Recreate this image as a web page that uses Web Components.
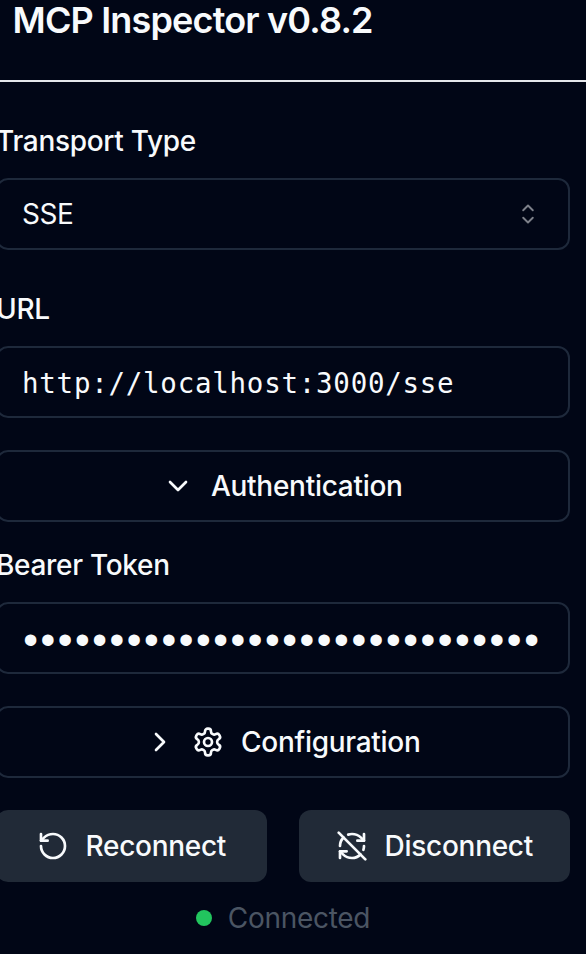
<!DOCTYPE html>
<html lang="en">
<head>
<meta charset="utf-8">
<title>MCP Inspector</title>
<style>
html, body { margin: 0; height: 100%; overflow: hidden; background: #010616; }
body { font-family: Inter, "Liberation Sans", sans-serif; font-size: 28px; letter-spacing: -.28px; color: #f8fafc; }
</style>
</head>
<body>
<inspector-sidebar>
  <side-header slot="header">MCP Inspector v0.8.2</side-header>
  <form-field>
    <field-label slot="label">Transport Type</field-label>
    <select-box>SSE</select-box>
  </form-field>
  <form-field>
    <field-label slot="label">URL</field-label>
    <text-box>http://localhost:3000/sse</text-box>
  </form-field>
  <action-button variant="outline"><ui-icon name="chevron-down"></ui-icon><span>Authentication</span></action-button>
  <form-field class="tight">
    <field-label slot="label">Bearer Token</field-label>
    <text-box secret>••••••••••••••••••••••••••••••</text-box>
  </form-field>
  <action-button variant="outline"><ui-icon name="chevron-right"></ui-icon><ui-icon name="settings"></ui-icon><span>Configuration</span></action-button>
  <button-row>
    <action-button><ui-icon name="rotate-ccw"></ui-icon><span>Reconnect</span></action-button>
    <action-button><ui-icon name="refresh-off"></ui-icon><span>Disconnect</span></action-button>
  </button-row>
  <connection-status>Connected</connection-status>
</inspector-sidebar>
<script>
function define(name, html) {
  const t = document.createElement('template');
  t.innerHTML = html;
  customElements.define(name, class extends HTMLElement {
    constructor() {
      super();
      this.attachShadow({ mode: 'open' }).append(t.content.cloneNode(true));
    }
  });
}

define('inspector-sidebar', `<style>
  :host { display: block; width: 586px; height: 954px; overflow: hidden; }
  main { display: flex; flex-direction: column; gap: 32px; width: 574px; margin-left: -4px; padding-top: 32px; }
  ::slotted(.tight) { margin-top: -16px; }
  ::slotted(connection-status) { margin-top: -16px; }
</style><slot name="header"></slot><main><slot></slot></main>`);

define('side-header', `<style>
  :host { display: block; box-sizing: border-box; height: 82px; padding-left: 12.5px; border-bottom: 2px solid #e5e7eb;
    font-size: 36px; font-weight: 600; line-height: 40px; letter-spacing: -.83px; }
</style><slot></slot>`);

define('form-field', `<style>:host { display: block; }</style><slot name="label"></slot><slot></slot>`);

define('field-label', `<style>
  :host { display: block; box-sizing: border-box; height: 64px; line-height: 52px; padding-top: 1px; font-weight: 480; letter-spacing: -.3px; }
</style><slot></slot>`);

define('select-box', `<style>
  :host { display: flex; align-items: center; justify-content: space-between; box-sizing: border-box; height: 72px;
    border: 2px solid #1e293b; border-radius: 12px; padding: 0 24px; letter-spacing: -.5px; }
  ui-icon { opacity: .5; }
</style><slot></slot><ui-icon name="caret-sort"></ui-icon>`);

define('text-box', `<style>
  :host { display: flex; align-items: center; box-sizing: border-box; height: 72px; border: 2px solid #1e293b;
    border-radius: 12px; padding: 1px 24px 0; white-space: nowrap; overflow: hidden;
    font-family: "DejaVu Sans Mono", monospace; font-size: 27.5px; letter-spacing: .74px; }
  :host([secret]) { font-family: "Liberation Sans", sans-serif; font-size: 42px; letter-spacing: 2.57px; padding: 4px 0 0 25.2px; }
</style><slot></slot>`);

define('action-button', `<style>
  :host { display: flex; flex: 1; align-items: center; justify-content: center; gap: 16px; box-sizing: border-box;
    min-height: 72px; border-radius: 12px; background: #212a37; font-weight: 480; }
  :host([variant=outline]) { border: 2px solid #1e293b; background: none; padding-right: 1px; }
  ::slotted(span) { margin-left: .6px; }
</style><slot></slot>`);

define('button-row', `<style>:host { display: flex; gap: 32px; }</style><slot></slot>`);

define('connection-status', `<style>
  :host { display: flex; align-items: center; justify-content: center; gap: 16px; height: 40px; color: #4b5563; }
  i { width: 16px; height: 16px; border-radius: 50%; background: #22c55e; }
</style><i></i><slot></slot>`);

const ICONS = {
  'chevron-down': '<path d="m6 9 6 6 6-6"/>',
  'chevron-right': '<path d="m9 18 6-6-6-6"/>',
  'settings': '<path d="M12.22 2h-.44a2 2 0 0 0-2 2v.18a2 2 0 0 1-1 1.73l-.43.25a2 2 0 0 1-2 0l-.15-.08a2 2 0 0 0-2.73.73l-.22.38a2 2 0 0 0 .73 2.73l.15.1a2 2 0 0 1 1 1.72v.51a2 2 0 0 1-1 1.74l-.15.09a2 2 0 0 0-.73 2.73l.22.38a2 2 0 0 0 2.73.73l.15-.08a2 2 0 0 1 2 0l.43.25a2 2 0 0 1 1 1.73V20a2 2 0 0 0 2 2h.44a2 2 0 0 0 2-2v-.18a2 2 0 0 1 1-1.73l.43-.25a2 2 0 0 1 2 0l.15.08a2 2 0 0 0 2.73-.73l.22-.39a2 2 0 0 0-.73-2.73l-.15-.08a2 2 0 0 1-1-1.74v-.5a2 2 0 0 1 1-1.74l.15-.09a2 2 0 0 0 .73-2.73l-.22-.38a2 2 0 0 0-2.73-.73l-.15.08a2 2 0 0 1-2 0l-.43-.25a2 2 0 0 1-1-1.73V4a2 2 0 0 0-2-2z"/><circle cx="12" cy="12" r="3"/>',
  'rotate-ccw': '<path d="M3 12a9 9 0 1 0 9-9 9.75 9.75 0 0 0-6.74 2.74L3 8"/><path d="M3 3v5h5"/>',
  'refresh-off': '<path d="M21 8L18.74 5.74A9.75 9.75 0 0 0 12 3C11 3 10.03 3.16 9.13 3.47"/><path d="M8 16H3v5"/><path d="M3 12C3 9.51 4 7.26 5.64 5.64"/><path d="m3 16 2.26 2.26A9.75 9.75 0 0 0 12 21c2.49 0 4.74-1 6.36-2.64"/><path d="M21 12c0 1-.16 1.97-.47 2.87"/><path d="M21 3v5h-5"/><path d="M22 22 2 2"/>'
};
const CARET = '<svg viewBox="0 0 15 15" fill="none" stroke="currentColor" stroke-width=".9" stroke-linecap="round" stroke-linejoin="round"><path d="M5.25 5.75 7.5 3.5l2.25 2.25M5.25 9.25 7.5 11.5l2.25-2.25"/></svg>';
customElements.define('ui-icon', class extends HTMLElement {
  connectedCallback() {
    if (this.shadowRoot) return;
    const name = this.getAttribute('name');
    this.attachShadow({ mode: 'open' }).innerHTML =
      '<style>:host { display: block; flex: none; width: 32px; height: 32px; } svg { display: block; width: 100%; height: 100%; }</style>' +
      (name === 'caret-sort' ? CARET :
      `<svg viewBox="0 0 24 24" fill="none" stroke="currentColor" stroke-width="2" stroke-linecap="round" stroke-linejoin="round">${ICONS[name]}</svg>`);
  }
});
</script>
</body>
</html>
